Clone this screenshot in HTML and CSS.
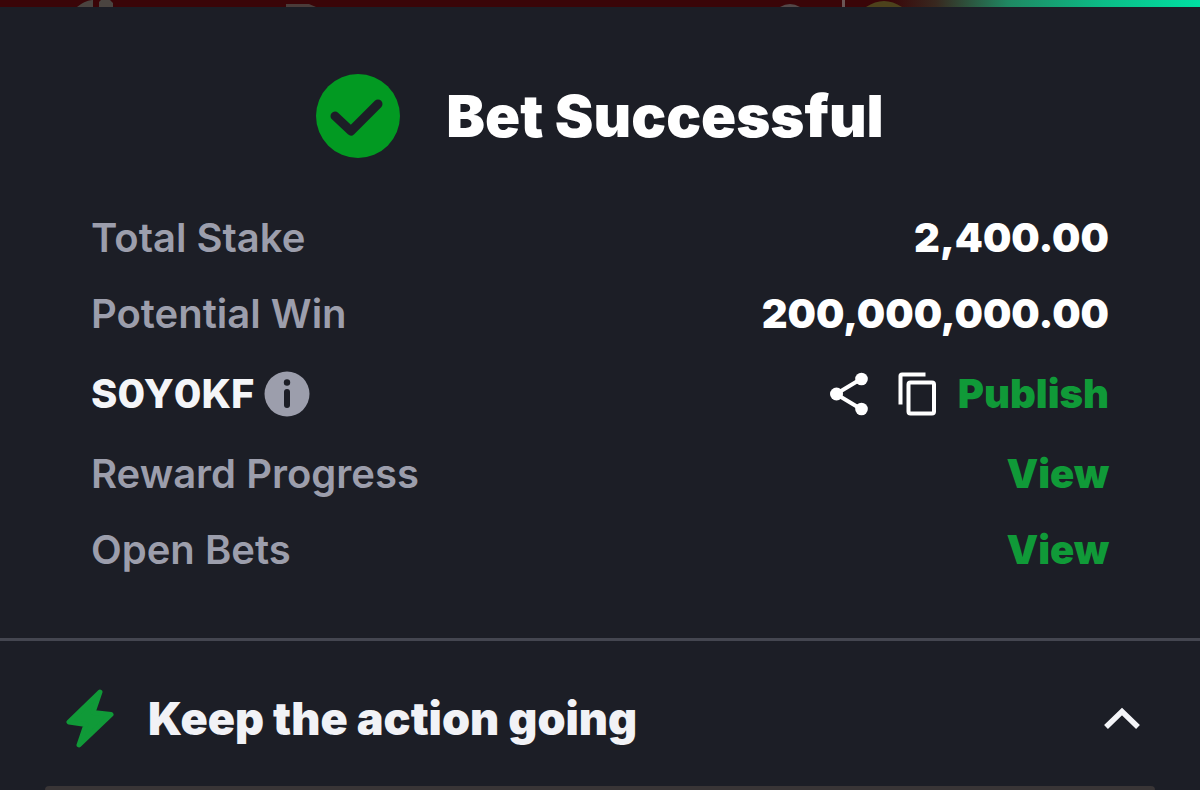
FILE: index.html
```html
<!DOCTYPE html>
<html lang="en">
<head>
    <meta charset="UTF-8">
    <meta name="viewport" content="width=device-width, initial-scale=1">
    <title>Bet Successful</title>
    <link rel="stylesheet" href="styles.css">
</head>
<body>
<!-- Edge of the page behind the sheet -->
<div class="backdrop">
    <svg class="backdrop-art" viewBox="0 0 1200 7" preserveAspectRatio="none" aria-hidden="true">
        <path d="M77 7 Q84 1 92 0 H93 V7 Z M99 7 V2 L101 0 H110 L113 3 V7 Z" fill="#4a4440"/>
        <path d="M286 7 V4 H309 L316 7 Z" fill="#4a3c3a"/>
        <path d="M780 7 Q790 1 800 7 Z" fill="#534848"/>
        <rect x="842" width="3" height="7" fill="#6a5555"/>
        <path d="M866 7 Q884 -5 902 7 Z" fill="#4d421c"/>
    </svg>
</div>
<main class="sheet">
    <header class="title-row">
        <svg class="check-icon" viewBox="0 0 84 84" aria-hidden="true">
            <circle cx="42" cy="42" r="42" fill="#029a22"/>
            <path d="M19 42 L35 57 L62 30" fill="none" stroke="#1c1e26" stroke-width="9" stroke-linecap="round" stroke-linejoin="round"/>
        </svg>
        <h1>Bet Successful</h1>
    </header>

    <div class="details">
        <div class="row">
            <span class="label">Total Stake</span>
            <span class="value">2,400.00</span>
        </div>
        <div class="row">
            <span class="label">Potential Win</span>
            <span class="value">200,000,000.00</span>
        </div>
        <div class="row code-row">
            <div class="code">
                <span class="code-text">S0Y0KF</span>
                <button class="icon-btn" type="button" aria-label="Booking code info">
                    <svg width="46" height="46" viewBox="0 0 46 46">
                        <circle cx="23" cy="23" r="22.5" fill="#9c9eac"/>
                        <circle cx="23" cy="11.5" r="3.2" fill="#1c1e26"/>
                        <path d="M23 21 V34" stroke="#1c1e26" stroke-width="6" stroke-linecap="round"/>
                    </svg>
                </button>
            </div>
            <div class="actions">
                <button class="icon-btn share-btn" type="button" aria-label="Share">
                    <svg width="38" height="44" viewBox="0 0 38 44">
                        <path d="M31 7 L6 22 L31 37" fill="none" stroke="#fff" stroke-width="4"/>
                        <circle cx="31.5" cy="7" r="6.3" fill="#fff"/>
                        <circle cx="6.5" cy="22" r="6.5" fill="#fff"/>
                        <circle cx="31.5" cy="37" r="6.3" fill="#fff"/>
                    </svg>
                </button>
                <button class="icon-btn" type="button" aria-label="Copy">
                    <svg width="38" height="44" viewBox="0 0 38 44" fill="none" stroke="#fff" stroke-width="4">
                        <path d="M27.5 2.5 H4 Q2.5 2.5 2.5 4 V32.5"/>
                        <rect x="10.5" y="10.5" width="25.5" height="31" rx="2"/>
                    </svg>
                </button>
                <a class="link" href="#">Publish</a>
            </div>
        </div>
        <div class="row">
            <span class="label">Reward Progress</span>
            <a class="link" href="#">View</a>
        </div>
        <div class="row">
            <span class="label">Open Bets</span>
            <a class="link" href="#">View</a>
        </div>
    </div>

    <section class="more">
        <div class="more-head">
            <svg class="bolt-icon" viewBox="0 0 48 60" aria-hidden="true">
                <path d="M34 3 L3 33 L20 35.5 L13 56 L45 25.5 L27 23.5 Z" fill="#109a38" stroke="#109a38" stroke-width="5" stroke-linejoin="round"/>
            </svg>
            <h2>Keep the action going</h2>
            <button class="icon-btn" type="button" aria-label="Collapse">
                <svg width="36" height="24" viewBox="0 0 36 24">
                    <path d="M2 20 L18 4.5 L34 20" fill="none" stroke="#f4f5f8" stroke-width="5.5"/>
                </svg>
            </button>
        </div>
        <div class="card"></div>
    </section>
</main>
</body>
</html>
```
FILE: styles.css
```css
* {
    box-sizing: border-box;
}

body {
    margin: 0;
    height: 100vh;
    display: flex;
    flex-direction: column;
    overflow: hidden;
    background: #1c1e26;
    color: #fff;
    font-family: Inter, "Liberation Sans", sans-serif;
}

.backdrop {
    flex: none;
    height: 7px;
    background: linear-gradient(to right, #3a0508 74%, #38281f 78%, #1f8862 84%, #0bbd87 92%, #00e0a2 100%);
}

.backdrop-art {
    display: block;
    width: 100%;
    height: 7px;
}

.sheet {
    flex: 1;
    display: flex;
    flex-direction: column;
    min-height: 0;
}

.title-row {
    display: flex;
    align-items: center;
    justify-content: center;
    gap: 46px;
    padding: 67px 0 42px;
}

.check-icon {
    width: 84px;
    height: 84px;
}

h1,
h2 {
    margin: 0;
    font-weight: 900;
}

h1 {
    font-size: 58px;
    line-height: 72px;
}

.details {
    padding: 0 91px 50px;
    border-bottom: 3px solid #444650;
}

.row {
    display: flex;
    align-items: center;
    justify-content: space-between;
    height: 76px;
    font-size: 40px;
    line-height: 48px;
}

.code-row {
    height: 84px;
}

.label {
    color: #9c9eac;
    font-weight: 600;
}

.value {
    font-weight: 900;
}

.code-text {
    color: #f4f5f8;
    font-weight: 800;
}

.code,
.actions {
    display: flex;
    align-items: center;
}

.code {
    gap: 10px;
}

.actions {
    gap: 22px;
}

.link {
    color: #109a38;
    font-weight: 900;
    text-decoration: none;
}

.icon-btn {
    display: flex;
    padding: 0;
    border: none;
    background: none;
    cursor: pointer;
}

.share-btn {
    margin-right: 8px;
}

.more {
    flex: 1;
    display: flex;
    flex-direction: column;
    padding: 0 45px;
}

.more-head {
    display: flex;
    align-items: center;
    padding: 48px 15px 37px 21px;
}

.bolt-icon {
    width: 48px;
    height: 60px;
    margin-right: 34px;
}

h2 {
    flex: 1;
    color: #f1f2f6;
    font-size: 45px;
    line-height: 60px;
}

.card {
    flex: 1;
    border-radius: 16px 16px 0 0;
    background: #393536;
}
```
